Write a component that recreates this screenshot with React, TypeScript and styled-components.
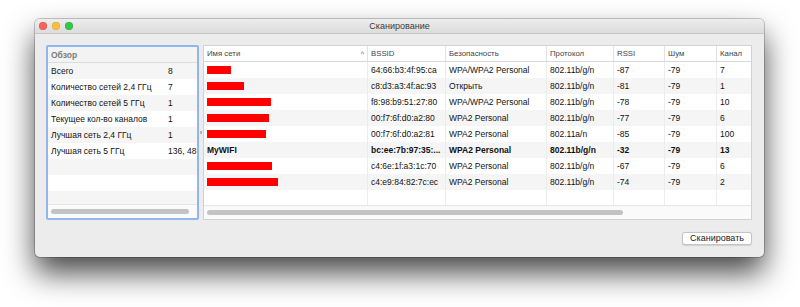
import React from 'react';
import styled, { createGlobalStyle } from 'styled-components';

const GlobalStyle = createGlobalStyle`
    body {
        margin: 0;
        background: #ffffff;
        font-family: "Liberation Sans", Arial, sans-serif;
    }
`

const Page = styled.div`
    width: 800px;
    height: 307px;
    padding: 19px 36px 0 35px;
    box-sizing: border-box;
    overflow: hidden;
`

const Window = styled.div`
    height: 238px;
    background: #ececec;
    border-radius: 5px;
    box-shadow: 0 0 0 1px rgba(0, 0, 0, 0.2), 0 16px 30px rgba(0, 0, 0, 0.72);
    display: flex;
    flex-direction: column;
    overflow: hidden;
`

const TitleBar = styled.div`
    height: 14px;
    background: linear-gradient(#ededed, #dcdcdc);
    border-bottom: 1px solid #c6c6c6;
    display: flex;
    align-items: center;
    position: relative;
    padding-left: 4px;
`

const Light = styled.span<{ color: string }>`
    width: 8px;
    height: 8px;
    border-radius: 50%;
    background: ${p => p.color};
    margin-right: 5px;
    box-shadow: inset 0 0 0 0.5px rgba(0, 0, 0, 0.15);
`

const Title = styled.div`
    position: absolute;
    left: 0;
    right: 0;
    text-align: center;
    font-size: 9px;
    color: #3a3a3a;
`

const Body = styled.div`
    flex: 1;
    display: flex;
    flex-direction: column;
    padding: 11px 12px 0 11px;
`

const Content = styled.div`
    height: 175px;
    display: flex;
`

const Overview = styled.div`
    width: 149px;
    border: 2px solid #8fb7ee;
    border-radius: 2px;
    background: #fff;
    display: flex;
    flex-direction: column;
    overflow: hidden;
`

const OverviewHeader = styled.div`
    height: 15px;
    flex-shrink: 0;
    background: #f3f3f3;
    border-bottom: 1px solid #dcdcdc;
    font-size: 8.5px;
    font-weight: bold;
    color: #7a7a7a;
    display: flex;
    align-items: center;
    padding-left: 3px;
`

const Stripes = styled.div<{ first: string; second: string }>`
    flex: 1;
    display: flex;
    flex-direction: column;
    background: repeating-linear-gradient(
        to bottom,
        ${p => p.first} 0 16px,
        ${p => p.second} 16px 32px
    );
    overflow: hidden;
`

const OverviewRow = styled.div`
    height: 16px;
    flex-shrink: 0;
    display: grid;
    grid-template-columns: 117px 40px;
    align-items: center;
    font-size: 8.5px;
    color: #111;
    padding-left: 3px;
    white-space: nowrap;
`

const ScrollTrack = styled.div`
    height: 13px;
    flex-shrink: 0;
    background: #fafafa;
    border-top: 1px solid #e6e6e6;
    display: flex;
    align-items: center;
    padding-left: 3px;
`

const ScrollThumb = styled.div<{ w: number }>`
    width: ${p => p.w}px;
    height: 5px;
    border-radius: 3px;
    background: #c3c3c3;
`

const Splitter = styled.div`
    width: 4px;
    display: flex;
    align-items: center;
    justify-content: center;
`

const Grip = styled.span`
    width: 2px;
    height: 3px;
    background: #b5b5b5;
`

const Table = styled.div`
    flex: 1;
    border: 1px solid #d2d2d2;
    background: #fff;
    display: flex;
    flex-direction: column;
    overflow: hidden;
`

const Columns = '164px 78px 101px 67px 51px 52px 60px'

const HeaderRow = styled.div`
    height: 15px;
    flex-shrink: 0;
    display: grid;
    grid-template-columns: ${Columns};
    border-bottom: 1px solid #d8d8d8;
    font-size: 7.8px;
    color: #444;
`

const HeaderCell = styled.div`
    display: flex;
    align-items: center;
    justify-content: space-between;
    padding: 0 3px;
    border-right: 1px solid #e2e2e2;
    white-space: nowrap;
`

const SortArrow = styled.span`
    font-size: 7px;
    color: #555;
`

const Row = styled.div<{ bold?: boolean; grow?: boolean }>`
    height: 16px;
    flex: ${p => (p.grow ? '1' : '0 0 auto')};
    display: grid;
    grid-template-columns: ${Columns};
    font-size: 8.5px;
    font-weight: ${p => (p.bold ? 'bold' : 'normal')};
    color: #111;
`

const Cell = styled.div`
    display: flex;
    align-items: center;
    padding: 0 2px 0 3px;
    border-right: 1px solid #ececec;
    white-space: nowrap;
    overflow: hidden;
`

const Redacted = styled.span<{ w: number }>`
    width: ${p => p.w}px;
    height: 8px;
    background: #ff0000;
`

const Footer = styled.div`
    display: flex;
    justify-content: flex-end;
    padding-top: 12px;
`

const ScanButton = styled.button`
    width: 70px;
    height: 13px;
    padding: 0;
    background: #fff;
    border: 1px solid #c4c4c4;
    border-radius: 3px;
    box-shadow: 0 0.5px 1px rgba(0, 0, 0, 0.12);
    font-family: "Liberation Sans", Arial, sans-serif;
    font-size: 9px;
    color: #222;
    line-height: 11px;
`

const overview: [string, string][] = [
    ['Всего', '8'],
    ['Количество сетей 2,4 ГГц', '7'],
    ['Количество сетей 5 ГГц', '1'],
    ['Текущее кол-во каналов', '1'],
    ['Лучшая сеть 2,4 ГГц', '1'],
    ['Лучшая сеть 5 ГГц', '136, 48'],
]

type Network = {
    name: string | number
    bssid: string
    security: string
    protocol: string
    rssi: string
    noise: string
    channel: string
    bold?: boolean
}

// numeric name = width of the red box hiding the network name
const networks: Network[] = [
    { name: 24, bssid: '64:66:b3:4f:95:ca', security: 'WPA/WPA2 Personal', protocol: '802.11b/g/n', rssi: '-87', noise: '-79', channel: '7' },
    { name: 37, bssid: 'c8:d3:a3:4f:ac:93', security: 'Открыть', protocol: '802.11b/g/n', rssi: '-81', noise: '-79', channel: '1' },
    { name: 64, bssid: 'f8:98:b9:51:27:80', security: 'WPA/WPA2 Personal', protocol: '802.11b/g/n', rssi: '-78', noise: '-79', channel: '10' },
    { name: 62, bssid: '00:f7:6f:d0:a2:80', security: 'WPA2 Personal', protocol: '802.11b/g/n', rssi: '-77', noise: '-79', channel: '6' },
    { name: 59, bssid: '00:f7:6f:d0:a2:81', security: 'WPA2 Personal', protocol: '802.11a/n', rssi: '-85', noise: '-79', channel: '100' },
    { name: 'MyWIFI', bssid: 'bc:ee:7b:97:35:...', security: 'WPA2 Personal', protocol: '802.11b/g/n', rssi: '-32', noise: '-79', channel: '13', bold: true },
    { name: 65, bssid: 'c4:6e:1f:a3:1c:70', security: 'WPA2 Personal', protocol: '802.11b/g/n', rssi: '-67', noise: '-79', channel: '6' },
    { name: 71, bssid: 'c4:e9:84:82:7c:ec', security: 'WPA2 Personal', protocol: '802.11b/g/n', rssi: '-74', noise: '-79', channel: '2' },
]

const headers = ['Имя сети', 'BSSID', 'Безопасность', 'Протокол', 'RSSI', 'Шум', 'Канал']

function App(): React.ReactElement {
    return (
        <Page>
            <GlobalStyle />
            <Window>
                <TitleBar>
                    <Light color='#fc605c' />
                    <Light color='#fdbc40' />
                    <Light color='#34c84a' />
                    <Title>Сканирование</Title>
                </TitleBar>
                <Body>
                    <Content>
                        <Overview>
                            <OverviewHeader>Обзор</OverviewHeader>
                            <Stripes first='#f5f5f5' second='#ffffff'>
                                {overview.map(([label, value]) => (
                                    <OverviewRow key={label}>
                                        <span>{label}</span>
                                        <span>{value}</span>
                                    </OverviewRow>
                                ))}
                            </Stripes>
                            <ScrollTrack>
                                <ScrollThumb w={138} />
                            </ScrollTrack>
                        </Overview>
                        <Splitter><Grip /></Splitter>
                        <Table>
                            <HeaderRow>
                                {headers.map((h, i) => (
                                    <HeaderCell key={h}>
                                        <span>{h}</span>
                                        {i === 0 && <SortArrow>^</SortArrow>}
                                    </HeaderCell>
                                ))}
                            </HeaderRow>
                            <Stripes first='#ffffff' second='#f5f5f5'>
                                {networks.map((n, i) => (
                                    <Row key={i} bold={n.bold}>
                                        <Cell>
                                            {typeof n.name === 'number' ? <Redacted w={n.name} /> : n.name}
                                        </Cell>
                                        <Cell>{n.bssid}</Cell>
                                        <Cell>{n.security}</Cell>
                                        <Cell>{n.protocol}</Cell>
                                        <Cell>{n.rssi}</Cell>
                                        <Cell>{n.noise}</Cell>
                                        <Cell>{n.channel}</Cell>
                                    </Row>
                                ))}
                                <Row grow>
                                    {headers.map(h => <Cell key={h} />)}
                                </Row>
                            </Stripes>
                            <ScrollTrack>
                                <ScrollThumb w={416} />
                            </ScrollTrack>
                        </Table>
                    </Content>
                    <Footer>
                        <ScanButton type='button'>Сканировать</ScanButton>
                    </Footer>
                </Body>
            </Window>
        </Page>
    );
}

export default App;
